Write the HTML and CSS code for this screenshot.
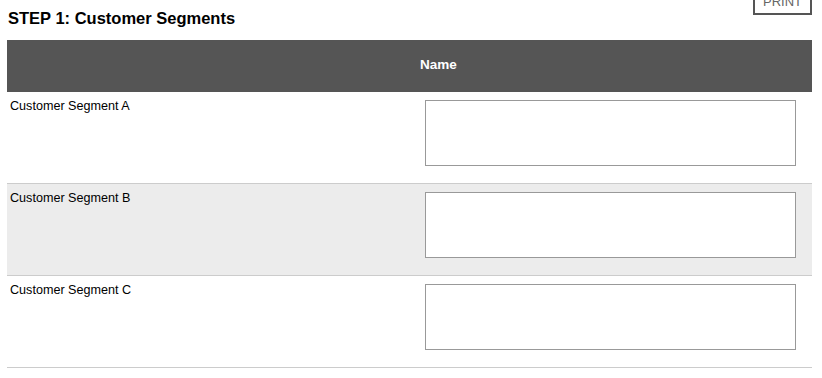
FILE: index.html
```html
<!DOCTYPE html>
<html>
<head>
<meta charset="utf-8">
<link rel="stylesheet" href="styles.css">
</head>
<body>
<div class="page">
  <button class="print">PRINT</button>
  <h2 class="title">STEP 1: Customer Segments</h2>
  <div class="grid">
    <div class="head"><span class="head-label">Name</span></div>
    <div class="row">
      <div class="label">Customer Segment A</div>
      <div class="field"><textarea class="box"></textarea></div>
    </div>
    <div class="row alt">
      <div class="label">Customer Segment B</div>
      <div class="field"><textarea class="box"></textarea></div>
    </div>
    <div class="row">
      <div class="label">Customer Segment C</div>
      <div class="field"><textarea class="box"></textarea></div>
    </div>
  </div>
</div>
</body>
</html>
```

FILE: styles.css
```css
html, body {
  margin: 0;
  padding: 0;
  background: #fff;
}
body {
  font-family: "Liberation Sans", Arial, sans-serif;
  color: #000;
}
.page {
  position: relative;
  padding: 0 10px 0 7px;
}
.print {
  position: absolute;
  top: -12px;
  right: 10px;
  width: 59px;
  height: 27px;
  border: 2px solid #555;
  background: #fff;
  color: #666;
  font-family: "Liberation Sans", Arial, sans-serif;
  font-size: 13px;
  padding: 0;
  line-height: 16px;
}
.title {
  margin: 0;
  padding: 9px 0 0 1px;
  height: 40px;
  box-sizing: border-box;
  font-size: 16.5px;
  font-weight: bold;
  line-height: 19px;
}
.grid {
  width: 805px;
}
.head {
  background: #555;
  height: 52px;
  display: flex;
  align-items: center;
  padding-left: 413px;
  padding-bottom: 3px;
  box-sizing: border-box;
}
.head-label {
  color: #fff;
  font-weight: bold;
  font-size: 13.5px;
}
.row {
  display: flex;
  border-bottom: 1px solid #ccc;
  height: 92px;
  box-sizing: border-box;
}
.row.alt {
  background: #ececec;
}
.label {
  width: 418px;
  padding: 7px 0 0 3px;
  box-sizing: border-box;
  font-size: 12.6px;
  line-height: 14px;
}
.field {
  padding-top: 8px;
}
.box {
  display: block;
  width: 371px;
  height: 66px;
  box-sizing: border-box;
  border: 1px solid #999;
  background: #fff;
  margin: 0;
  padding: 0;
  resize: none;
}
```
